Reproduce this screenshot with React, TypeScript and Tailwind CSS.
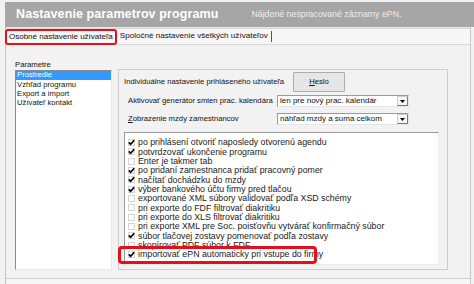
import React from "react";

const items: { t: string; c: boolean }[] = [
  { t: "po prihlásení otvoriť naposledy otvorenú agendu", c: true },
  { t: "potvrdzovať ukončenie programu", c: true },
  { t: "Enter je takmer tab", c: false },
  { t: "po pridaní zamestnanca pridať pracovný pomer", c: true },
  { t: "načítať dochádzku do mzdy", c: true },
  { t: "výber bankového účtu firmy pred tlačou", c: true },
  { t: "exportované XML súbory validovať podľa XSD schémy", c: false },
  { t: "pri exporte do FDF filtrovať diakritiku", c: false },
  { t: "pri exporte do XLS filtrovať diakritiku", c: false },
  { t: "pri exporte XML pre Soc. poisťovňu vytvárať konfirmačný súbor", c: false },
  { t: "súbor tlačovej zostavy pomenovať podľa zostavy", c: true },
  { t: "skopírovať PDF súbor k FDF", c: false },
  { t: "importovať ePN automaticky pri vstupe do firmy", c: true },
];

function Check({ on }: { on: boolean }) {
  return (
    <div className="w-[7px] h-[7px] border border-[#d4d4d4] bg-white flex items-center justify-center shrink-0">
      {on && (
        <svg width="7" height="7" viewBox="0 0 7 7" className="overflow-visible">
          <path d="M0.8 3.4 L2.6 5.3 L6.2 1.2" stroke="#000" strokeWidth="1.6" fill="none" />
        </svg>
      )}
    </div>
  );
}

function Select({ text }: { text: string }) {
  return (
    <div className="w-[132px] h-[12px] bg-white border border-[#9a9a9a] border-r-[#e6e6e6] border-b-[#e6e6e6] flex items-center">
      <span className="flex-1 pl-[2px] text-[8px] leading-none text-[#111] whitespace-nowrap overflow-hidden">{text}</span>
      <div className="w-[11px] h-[10px] bg-[#f6f6f6] border border-[#cfcfcf] border-r-[#7a7a7a] border-b-[#7a7a7a] flex items-center justify-center">
        <svg width="5" height="3" viewBox="0 0 5 3">
          <path d="M0 0 H5 L2.5 3 Z" fill="#000" />
        </svg>
      </div>
    </div>
  );
}

export default function App() {
  return (
    <div className="w-[474px] h-[284px] bg-[#f2f2f2] relative overflow-hidden font-['Liberation_Sans',Arial,sans-serif] text-[#111]">
      <div className="pl-[5px] pt-[2px] h-full flex flex-col">
        {/* title bar */}
        <div className="h-[25px] bg-[#a6a6a6] flex items-center pl-[11px] shrink-0">
          <span className="text-white font-bold text-[12.5px] tracking-[0.1px] leading-none">Nastavenie parametrov programu</span>
          <span className="ml-[33px] text-[#ededed] text-[8.8px] leading-none">Nájdené nespracované záznamy ePN.</span>
        </div>
        <div className="flex-1 flex flex-col border-l border-[#c4c4c4] border-r border-r-[#c8c8c8] mr-[3px]">
          <div className="h-[2px] bg-[#e8e8e8] border-b border-[#d6d6d6] shrink-0" />
          {/* tabs */}
          <div className="h-[16px] bg-[#f7f7f7] flex items-center border-b border-[#d8d8d8] shrink-0">
            <span className="ml-[3px] text-[8px] leading-none whitespace-nowrap">Osobné nastavenie užívateľa</span>
            <span className="ml-[7px] text-[8.1px] leading-none whitespace-nowrap">Spoločné nastavenie všetkých užívateľov</span>
            <div className="ml-[3px] w-px h-[11px] bg-[#555]" />
          </div>
          {/* content */}
          <div className="flex-1 pl-[9px] pt-[16px] flex flex-col">
            <div className="text-[7.7px] leading-none h-[9px]">Parametre</div>
            <div className="flex gap-[6px] mt-[-1px] h-[201px]">
              {/* left list */}
              <div className="w-[97px] mt-[1px] bg-white border border-[#8a8a8a] border-r-[#e8e8e8] border-b-[#e8e8e8] flex flex-col">
                <div className="h-[8.5px] bg-[#3399ff] text-white text-[7.7px] leading-[8.5px] pl-[1px]">Prostredie</div>
                <div className="h-[9.3px] text-[7.7px] leading-[9.3px] pl-[1px]">Vzhľad programu</div>
                <div className="h-[9.3px] text-[7.7px] leading-[9.3px] pl-[1px]">Export a import</div>
                <div className="h-[9.3px] text-[7.7px] leading-[9.3px] pl-[1px]">Užívateľ kontakt</div>
              </div>
              {/* group box */}
              <div className="w-[330px] border border-[#cdcdcd] pl-[5px] pr-[8px] pt-[1px] pb-[4px] flex flex-col">
                <div className="h-[21px] flex items-center">
                  <span className="text-[7.7px] leading-none w-[169px]">Individuálne nastavenie prihláseného užívateľa</span>
                  <div className="w-[52px] h-[20px] bg-[#e6e6e6] border border-[#adadad] rounded-[1px] flex items-center justify-center text-[7.7px] leading-none">
                    <span><span className="underline">H</span>eslo</span>
                  </div>
                </div>
                <div className="h-[18px] flex items-center pl-[4px]">
                  <span className="text-[7.7px] leading-none w-[149px] whitespace-nowrap">Aktivovať generátor smien prac. kalendára</span>
                  <Select text="len pre nový prac. kalendár" />
                </div>
                <div className="h-[18px] flex items-center pl-[4px]">
                  <span className="text-[7.7px] leading-none w-[149px] whitespace-nowrap"><span className="underline">Z</span>obrazenie mzdy zamestnancov</span>
                  <Select text="náhľad mzdy a suma celkom" />
                </div>
                <div className="mt-[4px] h-[133px] w-[315px] bg-white border border-[#9a9a9a] border-r-[#ebebeb] border-b-[#ebebeb] pt-[5px] pl-[3px] overflow-hidden">
                  {items.map((it, i) => (
                    <div key={i} className="h-[9.33px] flex items-center gap-[3px]">
                      <Check on={it.c} />
                      <span className="text-[8.8px] leading-none whitespace-nowrap text-[#1a1a1a]">{it.t}</span>
                    </div>
                  ))}
                </div>
              </div>
            </div>
          </div>
          <div className="h-[6px] border-t border-[#d0d0d0] bg-[#f6f6f6]" />
        </div>
      </div>
      {/* red annotation boxes */}
      <div className="absolute left-[5px] top-[29px] w-[112px] h-[16px] border-[2.5px] border-[#e3101b] rounded-[3px]" />
      <div className="absolute left-[118px] top-[246px] w-[199px] h-[18px] border-[3px] border-[#e3101b] rounded-[4px]" />
    </div>
  );
}
